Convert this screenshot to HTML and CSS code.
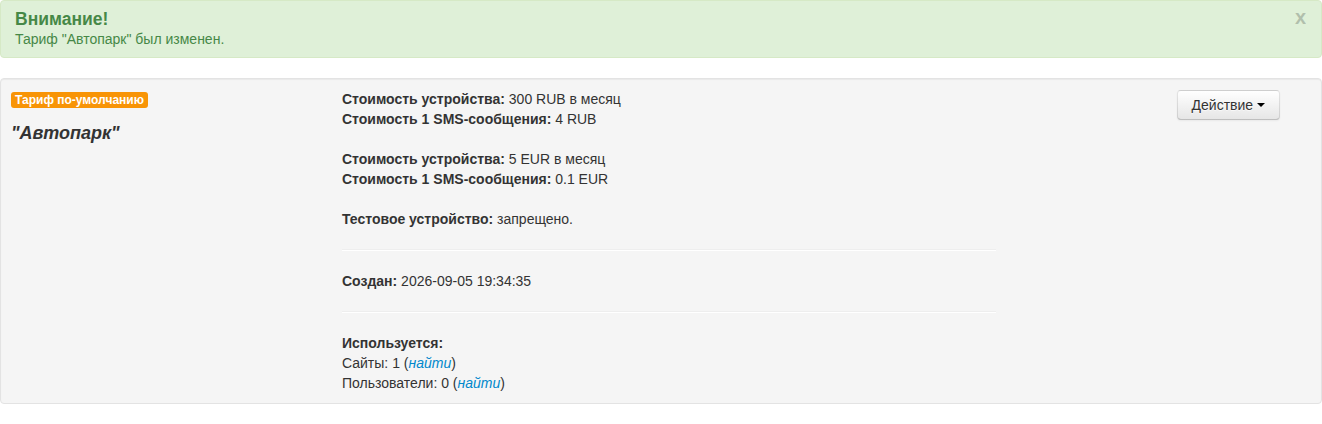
FILE: index.html
```html
<!DOCTYPE html>
<html lang="ru">
<head>
<meta charset="utf-8">
<title>Тариф</title>
<link rel="stylesheet" href="styles.css">
</head>
<body>
<div class="alert alert-success">
  <button class="close" type="button">x</button>
  <h4 class="alert-title">Внимание!</h4>
  <div class="alert-text">Тариф "Автопарк" был изменен.</div>
</div>
<div class="well">
  <div class="tariff-row">
    <div class="col-left">
      <div class="label-line"><span class="label label-warning">Тариф по-умолчанию</span></div>
      <h4 class="tariff-name">"Автопарк"</h4>
    </div>
    <div class="col-main">
      <p class="block"><b>Стоимость устройства:</b> 300 RUB в месяц<br><b>Стоимость 1 SMS-сообщения:</b> 4 RUB</p>
      <p class="block"><b>Стоимость устройства:</b> 5 EUR в месяц<br><b>Стоимость 1 SMS-сообщения:</b> 0.1 EUR</p>
      <p class="block last"><b>Тестовое устройство:</b> запрещено.</p>
      <hr class="sep">
      <p class="block last"><b>Создан:</b> 2026-09-05 19:34:35</p>
      <hr class="sep">
      <p class="block last"><b>Используется:</b><br>Сайты: 1 (<a class="link" href="#">найти</a>)<br>Пользователи: 0 (<a class="link" href="#">найти</a>)</p>
    </div>
    <div class="col-actions">
      <div class="btn-group">
        <button class="btn" type="button">Действие <span class="caret"></span></button>
      </div>
    </div>
  </div>
</div>
</body>
</html>
```
FILE: styles.css
```css
html, body {
  margin: 0;
  padding: 0;
}
body {
  font-family: "Liberation Sans", Arial, sans-serif;
  font-size: 14px;
  line-height: 20px;
  color: #333333;
  background: #ffffff;
}
.alert {
  position: relative;
  padding: 8px 35px 8px 14px;
  margin-bottom: 20px;
  border: 1px solid #d6e9c6;
  border-radius: 4px;
  background-color: #dff0d8;
  color: #468847;
}
.alert-title {
  margin: 0;
  font-size: 17.5px;
  line-height: 20px;
  font-weight: bold;
  color: #468847;
}
.alert-text {
  font-size: 14px;
  line-height: 20px;
}
.close {
  position: absolute;
  top: 6px;
  right: 15px;
  padding: 0;
  border: 0;
  background: transparent;
  font-family: "Liberation Sans", Arial, sans-serif;
  font-size: 20px;
  font-weight: bold;
  line-height: 20px;
  color: #000000;
  opacity: 0.2;
  cursor: pointer;
}
.well {
  padding: 10px;
  margin-bottom: 20px;
  background-color: #f5f5f5;
  border: 1px solid #e3e3e3;
  border-radius: 4px;
  box-shadow: inset 0 1px 1px rgba(0, 0, 0, 0.05);
}
.tariff-row {
  display: grid;
  grid-template-columns: 303px 654px 1fr;
  column-gap: 28px;
  align-items: start;
}
.label-line {
  height: 20px;
  padding-top: 3px;
  box-sizing: border-box;
}
.label {
  display: inline-block;
  padding: 2px 4px;
  font-size: 12px;
  font-weight: bold;
  line-height: 12px;
  color: #ffffff;
  white-space: nowrap;
  border-radius: 3px;
  vertical-align: top;
}
.label-warning {
  background-color: #f89406;
}
.tariff-name {
  margin: 14px 0 0;
  font-size: 18px;
  line-height: 20px;
  font-weight: bold;
  font-style: italic;
  color: #333333;
}
.block {
  margin: 0 0 20px;
}
.block.last {
  margin-bottom: 0;
}
.sep {
  margin: 20px 0;
  border: 0;
  border-top: 1px solid #eeeeee;
  border-bottom: 1px solid #ffffff;
  height: 0;
}
.link {
  color: #0088cc;
  font-style: italic;
  text-decoration: none;
}
.col-actions {
  display: flex;
  justify-content: flex-end;
  padding-right: 31px;
  padding-top: 1px;
}
.btn {
  display: inline-block;
  padding: 4px 14px;
  font-family: "Liberation Sans", Arial, sans-serif;
  font-size: 14px;
  line-height: 20px;
  color: #333333;
  text-align: center;
  text-shadow: 0 1px 1px rgba(255, 255, 255, 0.75);
  background-color: #f5f5f5;
  background-image: linear-gradient(to bottom, #ffffff, #e6e6e6);
  border: 1px solid #cccccc;
  border-color: rgba(0, 0, 0, 0.1) rgba(0, 0, 0, 0.1) rgba(0, 0, 0, 0.25);
  border-radius: 4px;
  box-shadow: inset 0 1px 0 rgba(255, 255, 255, 0.2), 0 1px 2px rgba(0, 0, 0, 0.05);
  cursor: pointer;
}
.caret {
  display: inline-block;
  width: 0;
  height: 0;
  margin-top: 8px;
  vertical-align: top;
  border-top: 4px solid #000000;
  border-right: 4px solid transparent;
  border-left: 4px solid transparent;
}
```
